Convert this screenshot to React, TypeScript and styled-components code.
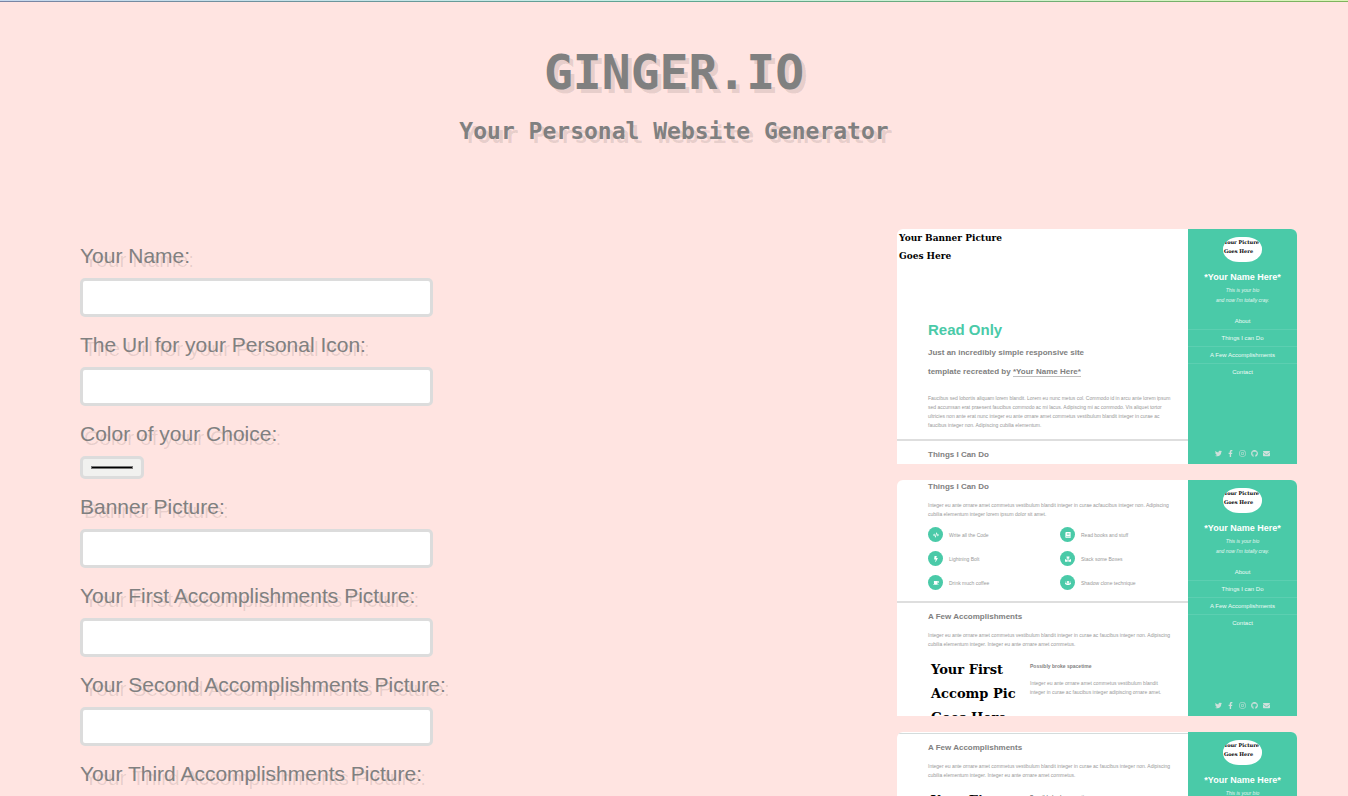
import React from "react";
import styled, { createGlobalStyle } from "styled-components";
import {
  FaTwitter,
  FaFacebookF,
  FaInstagram,
  FaGithub,
  FaEnvelope,
  FaCode,
  FaBook,
  FaBolt,
  FaBoxes,
  FaCoffee,
  FaUsers,
} from "react-icons/fa";

const teal = "#4acaa8";
const sans = `"Liberation Sans", Arial, sans-serif`;
const serif = `"DejaVu Serif", serif`;

const GlobalStyle = createGlobalStyle`
  * { box-sizing: border-box; }
  body {
    margin: 0;
    background: #ffe4e1;
    color: gray;
    font-family: ${sans};
  }
  h1, h2, h3, h4, p, ul { margin: 0; padding: 0; }
  ul { list-style: none; }
`;

const Rainbow = styled.div`
  height: 2px;
  background:
    linear-gradient(to right, #c6d8ee, #c6efe4, #dcf5b8) top / 100% 1px no-repeat,
    linear-gradient(to right, #7a84a4, #5fa592, #7fb45c) bottom / 100% 1px no-repeat;
`;

const Header = styled.header`
  padding: 42px 16px 83px;
  text-align: center;
  font-family: "DejaVu Sans Mono", monospace;
  text-shadow: 4px 4px rgba(0, 0, 0, 0.1);
`;

const Title = styled.h1`
  font-size: 48px;
  line-height: 56px;
`;

const Subtitle = styled.h2`
  margin-top: 16px;
  font-size: 23px;
  line-height: 30px;
`;

const Main = styled.main`
  display: flex;
  justify-content: space-between;
  align-items: flex-start;
  padding: 0 51px 0 80px;
`;

const Form = styled.form`
  display: flex;
  flex-direction: column;
  gap: 17px;
  padding-top: 16px;
`;

const Field = styled.div`
  display: flex;
  flex-direction: column;
  align-items: flex-start;
  gap: 11px;
`;

const Label = styled.label`
  font-size: 21px;
  line-height: 22px;
  white-space: nowrap;
  text-shadow: 4px 4px rgba(0, 0, 0, 0.1);
`;

const TextInput = styled.input`
  width: 353px;
  height: 39px;
  padding: 6px;
  border: 3px solid #dcdcdc;
  border-radius: 5px;
  background: #fff;
  font-size: 16px;
`;

const ColorInput = styled.input`
  width: 64px;
  height: 23px;
  padding: 3px 6px;
  border: 3px solid #dcdcdc;
  border-radius: 5px;
  background: #f1f1ef;
`;

const Previews = styled.section`
  display: flex;
  flex-direction: column;
  gap: 16px;
  width: 400px;
`;

const Card = styled.article<{ $height?: number }>`
  display: flex;
  height: ${(p) => p.$height ?? 236}px;
  overflow: hidden;
  border-radius: 6px 6px 0 0;
  background: #fff;
`;

const Page = styled.div`
  flex: 1;
  min-width: 0;
`;

const Rule = styled.div`
  height: 2px;
  border-bottom: 1px solid #d4dcdc;
`;

const Banner = styled.p`
  height: 82px;
  padding-left: 2px;
  color: #000;
  font: bold 9px/18px ${serif};
`;

const Section = styled.div<{ $top: number; $bottom?: number }>`
  padding: ${(p) => p.$top}px 28px ${(p) => p.$bottom ?? 9}px 31px;
  border-bottom: 2px solid #dedede;
`;

const Hero = styled.h2`
  color: ${teal};
  font-size: 15px;
  line-height: 20px;
`;

const Lead = styled.h3`
  width: 180px;
  margin: 3px 0 13px;
  font-size: 8px;
  line-height: 19px;
`;

const NameLink = styled.a`
  color: inherit;
  text-decoration: none;
  border-bottom: 1px solid #c0c0c0;
`;

const Heading = styled.h3`
  font-size: 8px;
  line-height: 12px;
`;

const Copy = styled.p`
  color: #999;
  font-size: 5px;
  line-height: 9px;
  white-space: nowrap;
`;

const Intro = styled(Copy)`
  margin-top: 8px;
`;

const Skills = styled.ul`
  display: grid;
  grid-template-columns: 132px 1fr;
  row-gap: 9px;
  margin-top: 8px;
`;

const Skill = styled.li`
  display: flex;
  align-items: center;
  gap: 6px;
  color: #999;
  font-size: 5px;
`;

const Disc = styled.span`
  display: grid;
  place-items: center;
  width: 15px;
  height: 15px;
  border-radius: 50%;
  background: ${teal};
  color: #fff;
  font-size: 6px;
`;

const Accomplishment = styled.div`
  display: grid;
  grid-template-columns: 99px 1fr;
  margin-top: 9px;
  padding-left: 3px;
`;

const PictureText = styled.p`
  color: #000;
  font: bold 13px/24px ${serif};
`;

const Detail = styled.div`
  display: flex;
  flex-direction: column;
  gap: 8px;
  padding-top: 4px;
`;

const DetailTitle = styled.h4`
  font-size: 5px;
  line-height: 9px;
`;

const Sidebar = styled.aside`
  display: flex;
  flex-direction: column;
  align-items: center;
  width: 109px;
  padding: 8px 0 7px;
  background: ${teal};
  color: #fff;
`;

const Avatar = styled.p`
  width: 39px;
  height: 25px;
  overflow: hidden;
  border-radius: 16px / 12px;
  background: #fff;
  color: #000;
  font: bold 5px/9px ${serif};
  white-space: nowrap;
  padding: 1px;
`;

const Name = styled.h3`
  margin-top: 9px;
  font-size: 9px;
  line-height: 12px;
`;

const Bio = styled.p`
  margin-top: 2px;
  color: #e4f7f1;
  font-size: 5px;
  font-style: italic;
  line-height: 10px;
  text-align: center;
`;

const Nav = styled.nav`
  display: flex;
  flex-direction: column;
  align-self: stretch;
  margin-top: 8px;
`;

const NavLink = styled.a`
  border-bottom: 1px solid #5ccfb1;
  color: #eefaf6;
  font-size: 6px;
  line-height: 16px;
  text-align: center;
  text-decoration: none;
  &:last-child { border-bottom: 0; }
`;

const Social = styled.div`
  display: flex;
  gap: 5px;
  margin-top: auto;
  color: #cfe0db;
  font-size: 7px;
`;

const Profile = () => (
  <Sidebar>
    <Avatar>Your Picture<br />Goes Here</Avatar>
    <Name>*Your Name Here*</Name>
    <Bio>This is your bio<br />and now I'm totally cray.</Bio>
    <Nav>
      <NavLink href="#about">About</NavLink>
      <NavLink href="#things">Things I can Do</NavLink>
      <NavLink href="#accomplishments">A Few Accomplishments</NavLink>
      <NavLink href="#contact">Contact</NavLink>
    </Nav>
    <Social>
      <FaTwitter />
      <FaFacebookF />
      <FaInstagram />
      <FaGithub />
      <FaEnvelope />
    </Social>
  </Sidebar>
);

const skills = [
  { icon: <FaCode />, text: "Write all the Code" },
  { icon: <FaBook />, text: "Read books and stuff" },
  { icon: <FaBolt />, text: "Lightning Bolt" },
  { icon: <FaBoxes />, text: "Stack some Boxes" },
  { icon: <FaCoffee />, text: "Drink much coffee" },
  { icon: <FaUsers />, text: "Shadow clone technique" },
];

const Accomplishments = () => (
  <Section $top={8}>
    <Heading>A Few Accomplishments</Heading>
    <Intro>
      Integer eu ante ornare amet commetus vestibulum blandit integer in curae ac faucibus integer non. Adipiscing
      <br />
      cubilia elementum integer. Integer eu ante ornare amet commetus.
    </Intro>
    <Accomplishment>
      <PictureText>Your First<br />Accomp Pic<br />Goes Here</PictureText>
      <Detail>
        <DetailTitle>Possibly broke spacetime</DetailTitle>
        <Copy>
          Integer eu ante ornare amet commetus vestibulum blandit
          <br />
          integer in curae ac faucibus integer adipiscing ornare amet.
        </Copy>
      </Detail>
    </Accomplishment>
  </Section>
);

const fields = [
  { id: "name", label: "Your Name:" },
  { id: "icon", label: "The Url for your Personal Icon:" },
  { id: "color", label: "Color of your Choice:", color: true },
  { id: "banner", label: "Banner Picture:" },
  { id: "first", label: "Your First Accomplishments Picture:" },
  { id: "second", label: "Your Second Accomplishments Picture:" },
  { id: "third", label: "Your Third Accomplishments Picture:" },
];

export default function App() {
  return (
    <>
      <GlobalStyle />
      <Rainbow />
      <Header>
        <Title>GINGER.IO</Title>
        <Subtitle>Your Personal Website Generator</Subtitle>
      </Header>
      <Main>
        <Form>
          {fields.map((f) => (
            <Field key={f.id}>
              <Label htmlFor={f.id}>{f.label}</Label>
              {f.color ? (
                <ColorInput id={f.id} type="color" defaultValue="#000000" />
              ) : (
                <TextInput id={f.id} type="text" />
              )}
            </Field>
          ))}
        </Form>
        <Previews>
          <Card $height={235}>
            <Page>
              <Banner>Your Banner Picture<br />Goes Here</Banner>
              <Section $top={9}>
                <Hero>Read Only</Hero>
                <Lead>
                  Just an incredibly simple responsive site template recreated by{" "}
                  <NameLink href="#about">*Your Name Here*</NameLink>
                </Lead>
                <Copy>
                  Faucibus sed lobortis aliquam lorem blandit. Lorem eu nunc metus col. Commodo id in arcu ante lorem ipsum
                  <br />
                  sed accumsan erat praesent faucibus commodo ac mi lacus. Adipiscing mi ac commodo. Vis aliquet tortor
                  <br />
                  ultricies non ante erat nunc integer eu ante ornare amet commetus vestibulum blandit integer in curae ac
                  <br />
                  faucibus integer non. Adipiscing cubilia elementum.
                </Copy>
              </Section>
              <Section $top={8}>
                <Heading>Things I Can Do</Heading>
              </Section>
            </Page>
            <Profile />
          </Card>
          <Card>
            <Page>
              <Section $top={1} $bottom={11}>
                <Heading>Things I Can Do</Heading>
                <Intro>
                  Integer eu ante ornare amet commetus vestibulum blandit integer in curae acfaucibus integer non. Adipiscing
                  <br />
                  cubilia elementum integer lorem ipsum dolor sit amet.
                </Intro>
                <Skills>
                  {skills.map((s) => (
                    <Skill key={s.text}>
                      <Disc>{s.icon}</Disc>
                      {s.text}
                    </Skill>
                  ))}
                </Skills>
              </Section>
              <Accomplishments />
            </Page>
            <Profile />
          </Card>
          <Card>
            <Page>
              <Rule />
              <Accomplishments />
            </Page>
            <Profile />
          </Card>
        </Previews>
      </Main>
    </>
  );
}
